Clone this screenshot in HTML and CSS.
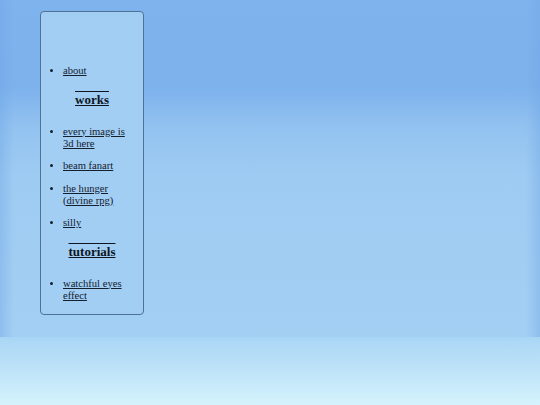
FILE: index.html
```html
<!DOCTYPE html>
<html>
<head>
<meta charset="utf-8">
<title>sidebar</title>
<link rel="stylesheet" href="styles.css">
</head>
<body>
<nav class="sidebar">
  <ul class="links">
    <li><a href="#">about</a></li>
  </ul>
  <h3 class="section"><a href="#">works</a></h3>
  <ul class="links">
    <li><a href="#">every image is 3d here</a></li>
    <li><a href="#">beam fanart</a></li>
    <li><a href="#">the hunger (divine rpg)</a></li>
    <li><a href="#">silly</a></li>
  </ul>
  <h3 class="section"><a href="#">tutorials</a></h3>
  <ul class="links">
    <li><a href="#">watchful eyes effect</a></li>
  </ul>
</nav>
</body>
</html>
```

FILE: styles.css
```css
html {
  min-height: 100%;
  background:
    linear-gradient(to right, rgba(110,165,230,0.4), rgba(110,165,230,0) 14px, rgba(110,165,230,0) calc(100% - 14px), rgba(110,165,230,0.4)) 0 0 / 100% 337px no-repeat,
    linear-gradient(#7fb3ee 0, #7db1ec 85px, #93c3f0 130px, #9ecbf2 175px, #a3cff3 337px) 0 0 / 100% 337px no-repeat,
    linear-gradient(#a9d5f5 0, #a9d5f5 337px, #d4f3fc 405px) 0 0 / 100% 405px no-repeat,
    #d4f3fc;
}

body {
  margin: 0;
  padding: 11px 0 0 40px;
  font-family: "Liberation Serif", "Times New Roman", serif;
  color: #14202e;
}

.sidebar {
  box-sizing: border-box;
  width: 104px;
  padding: 53px 12px 12.5px 0;
  border: 1px solid #4f7195;
  border-radius: 4px;
  background: #a2cef4;
}

.links {
  margin: 0;
  padding: 0 0 0 22px;
  font-size: 10.6px;
  line-height: 12px;
}

.links li + li {
  margin-top: 10.5px;
}

.links a {
  color: #14202e;
}

.section {
  margin: 15px -12px 18.5px 0;
  text-align: center;
  font-size: 13px;
  line-height: 15px;
  font-weight: bold;
}

.section a {
  color: #0c1622;
  text-decoration: underline overline;
}
```
